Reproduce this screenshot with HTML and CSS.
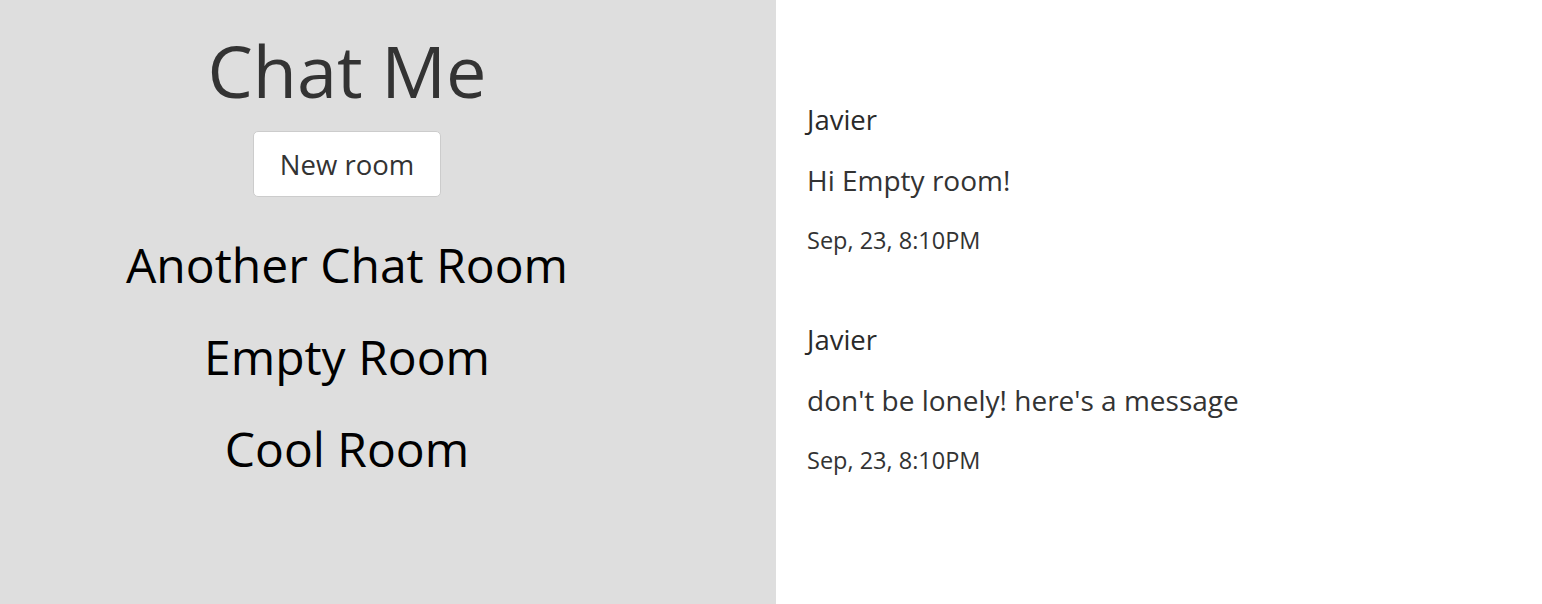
FILE: index.html
```html
<!DOCTYPE html>
<html>
<head>
<meta charset="utf-8">
<link rel="stylesheet" href="styles.css">
</head>
<body>
<div class="app">
  <aside class="sidebar">
    <h1 class="title">Chat Me</h1>
    <button class="new-room">New room</button>
    <ul class="rooms">
      <li>Another Chat Room</li>
      <li>Empty Room</li>
      <li>Cool Room</li>
    </ul>
  </aside>
  <main class="messages">
    <div class="message">
      <div class="user">Javier</div>
      <div class="content">Hi Empty room!</div>
      <div class="time">Sep, 23, 8:10PM</div>
    </div>
    <div class="message">
      <div class="user">Javier</div>
      <div class="content">don't be lonely! here's a message</div>
      <div class="time">Sep, 23, 8:10PM</div>
    </div>
  </main>
</div>
</body>
</html>
```
FILE: styles.css
```css
html, body {
  margin: 0;
  padding: 0;
  height: 100%;
}
body {
  font-family: "Open Sans", sans-serif;
  color: #333;
  background: #fff;
}
.app {
  display: flex;
  height: 604px;
}
.sidebar {
  width: 776px;
  flex: none;
  background: #dedede;
  display: flex;
  flex-direction: column;
  align-items: center;
  padding-right: 82px;
  box-sizing: border-box;
}
.title {
  margin: 25px 0 0;
  font-size: 72px;
  font-weight: 400;
  line-height: 90px;
  color: #333;
}
.new-room {
  margin-top: 16px;
  width: 188px;
  height: 66px;
  background: #fff;
  border: 1px solid #ccc;
  border-radius: 5px;
  font-family: "Open Sans", sans-serif;
  font-size: 27.5px;
  color: #333;
}
.rooms {
  list-style: none;
  margin: 22px 0 0;
  padding: 0;
  display: flex;
  flex-direction: column;
  align-items: center;
}
.rooms li {
  font-size: 48px;
  line-height: 92px;
  color: #000;
}
.messages {
  flex: 1;
  padding: 90px 0 0 31px;
}
.message {
  margin-bottom: 40px;
}
.user, .content, .time {
  line-height: 60px;
  color: #333;
}
.user {
  font-size: 27.5px;
  font-weight: 400;
  color: #2a2a2a;
}
.content {
  font-size: 28px;
}
.time {
  font-size: 23.5px;
}
```
